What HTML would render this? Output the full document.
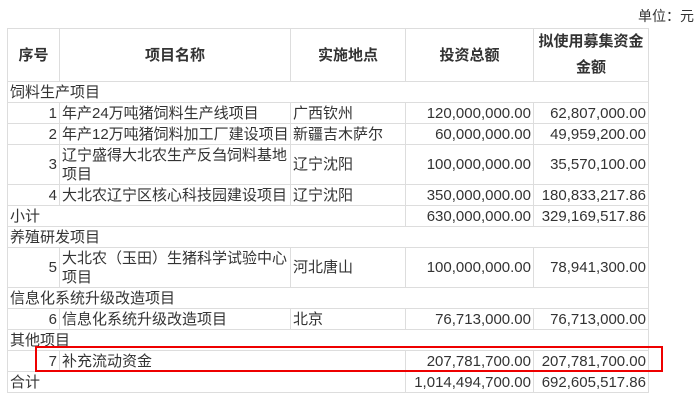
<!DOCTYPE html>
<html><head><meta charset="utf-8"><style>
body{margin:0;width:700px;height:406px;background:#fff;position:relative;font-family:"Liberation Sans","Noto Sans CJK SC",sans-serif;color:#333;font-size:15px}
.unit{position:absolute;right:6px;top:6px;font-size:14px}
table{position:absolute;left:7px;top:28px;border-collapse:collapse;table-layout:fixed;width:641px}
td,th{border:1px solid #ddd;padding:0 2px;line-height:19px;white-space:nowrap;overflow:hidden}
th{font-weight:bold;text-align:center;height:50px}
td.r{text-align:right}
tr{height:21px}
.two td{height:39px}
.wrap{white-space:normal}
.red{position:absolute;left:35px;top:346px;width:624px;height:22px;border:2px solid #e00;}
</style></head><body>
<div class="unit">单位：元</div>
<table>
<colgroup><col style="width:52px"><col style="width:231px"><col style="width:115px"><col style="width:128px"><col style="width:115px"></colgroup>
<tr><th>序号</th><th>项目名称</th><th>实施地点</th><th>投资总额</th><th class="wrap" style="line-height:26px">拟使用募集资金金额</th></tr>
<tr><td colspan="5">饲料生产项目</td></tr>
<tr><td class="r">1</td><td>年产24万吨猪饲料生产线项目</td><td>广西钦州</td><td class="r">120,000,000.00</td><td class="r">62,807,000.00</td></tr>
<tr><td class="r">2</td><td>年产12万吨猪饲料加工厂建设项目</td><td>新疆吉木萨尔</td><td class="r">60,000,000.00</td><td class="r">49,959,200.00</td></tr>
<tr class="two"><td class="r">3</td><td class="wrap">辽宁盛得大北农生产反刍饲料基地项目</td><td>辽宁沈阳</td><td class="r">100,000,000.00</td><td class="r">35,570,100.00</td></tr>
<tr><td class="r">4</td><td>大北农辽宁区核心科技园建设项目</td><td>辽宁沈阳</td><td class="r">350,000,000.00</td><td class="r">180,833,217.86</td></tr>
<tr><td colspan="3">小计</td><td class="r">630,000,000.00</td><td class="r">329,169,517.86</td></tr>
<tr><td colspan="5">养殖研发项目</td></tr>
<tr class="two"><td class="r">5</td><td class="wrap">大北农（玉田）生猪科学试验中心项目</td><td>河北唐山</td><td class="r">100,000,000.00</td><td class="r">78,941,300.00</td></tr>
<tr><td colspan="5">信息化系统升级改造项目</td></tr>
<tr><td class="r">6</td><td>信息化系统升级改造项目</td><td>北京</td><td class="r">76,713,000.00</td><td class="r">76,713,000.00</td></tr>
<tr><td colspan="5">其他项目</td></tr>
<tr><td class="r">7</td><td colspan="2">补充流动资金</td><td class="r">207,781,700.00</td><td class="r">207,781,700.00</td></tr>
<tr><td colspan="3">合计</td><td class="r">1,014,494,700.00</td><td class="r">692,605,517.86</td></tr>
</table>
<div class="red"></div>
</body></html>
